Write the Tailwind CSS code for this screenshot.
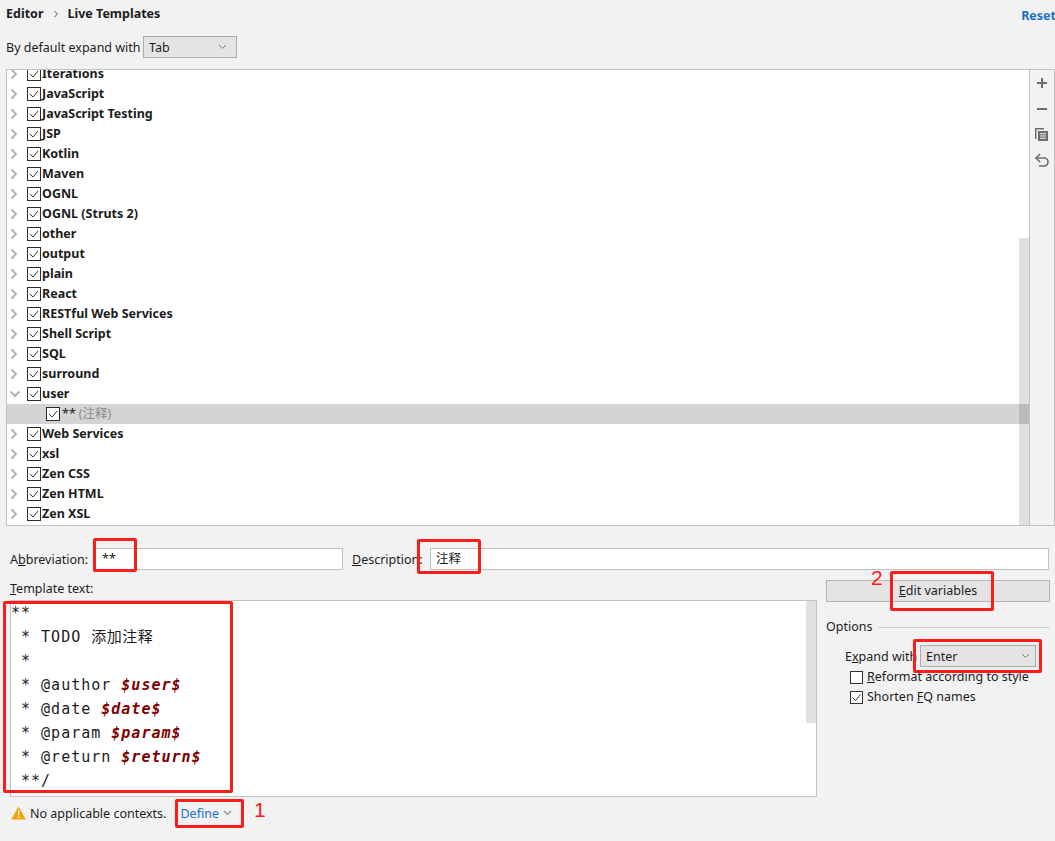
<!DOCTYPE html>
<html lang="en">
<head>
<meta charset="utf-8">
<title>Live Templates</title>
<script src="https://cdn.jsdelivr.net/npm/@tailwindcss/browser@4"></script>
</head>
<body class="m-0 bg-[#f2f2f2]">
<div class="relative flex h-[841px] w-[1055px] flex-col overflow-hidden whitespace-nowrap bg-[#f2f2f2] font-['Noto_Sans','Noto_Sans_CJK_SC',sans-serif] text-[12.5px] leading-[18px] text-[#1c1c1c]">

  <!-- breadcrumb -->
  <div class="flex h-[29px] justify-between pl-[6px] pt-[5px]">
    <div class="flex items-center self-start font-bold">
      <span>Editor</span>
      <svg class="ml-[9px] mr-[7px]" width="8" height="10" viewBox="0 0 8 10"><path d="M2.500 2l3 3-3 3" fill="none" stroke="#555" stroke-width="1"/></svg>
      <span>Live Templates</span>
    </div>
    <span class="-mr-[1px] mt-[2px] font-bold text-[#1a73c8]">Reset</span>
  </div>

  <!-- default expand -->
  <div class="flex h-[40px] items-center pb-[4px] pl-[6px]">
    <span class="w-[137px] pt-[2px]">By default expand with</span>
    <div class="flex h-[22px] w-[94px] items-center justify-between border border-[#adadad] bg-[#e4e4e4] pl-[5px] pr-[9px]">
      <span class="pt-[2px]">Tab</span>
      <svg width="9" height="6" viewBox="0 0 9 6"><path d="M1 1l3.500 3.500L8 1" fill="none" stroke="#7a7a7a"/></svg>
    </div>
  </div>

  <!-- template tree -->
  <div class="ml-[6px] flex h-[457px] w-[1049px] border border-[#c2c2c2]">
    <div class="relative w-[1022px] overflow-hidden bg-white">
      <div id="tree" class="-mt-[6px]"></div>
      <div class="absolute bottom-0 right-0 top-[168px] w-[10px] bg-black/[0.12]"></div>
    </div>
    <div class="flex w-[25px] flex-col items-center gap-[6px] border-l border-[#c2c2c2] pr-[1px] pt-[3px]">
      <svg width="20" height="20" viewBox="0 0 20 20"><path d="M10 5v10M5 10h10" stroke="#6e6e6e" stroke-width="2"/></svg>
      <svg width="20" height="20" viewBox="0 0 20 20"><path d="M5 10h10" stroke="#6e6e6e" stroke-width="2"/></svg>
      <svg width="20" height="20" viewBox="0 0 20 20"><path d="M3 3h9v1.500H4.500V14H3z" fill="#6e6e6e"/><path fill-rule="evenodd" d="M6 6h10v10H6zM8 8.200v1h6v-1zM8 10.500v1h6v-1zM8 12.800v1h6v-1z" fill="#6e6e6e"/></svg>
      <svg width="20" height="20" viewBox="0 0 20 20"><path d="M5 7h7a3.500 3.500 0 0 1 0 8H7" fill="none" stroke="#6e6e6e" stroke-width="1.600"/><path d="M8 3L4 7l4 4" fill="none" stroke="#6e6e6e" stroke-width="1.600"/></svg>
    </div>
  </div>

  <!-- abbreviation / description -->
  <div class="mt-[22px] flex h-[22px] items-center pl-[10px]">
    <span class="w-[84px] pt-[2px]">A<u>b</u>breviation:</span>
    <div class="flex h-[22px] w-[249px] items-center border border-[#c2c2c2] bg-white pl-[7px]">**</div>
    <span class="ml-[9px] w-[78px] pt-[2px]"><u>D</u>escription:</span>
    <div class="flex h-[22px] w-[619px] items-center border border-[#c2c2c2] bg-white pl-[5px]">注释</div>
  </div>

  <!-- editor + options -->
  <div class="mt-[8px] flex pl-[10px]">
    <div class="w-[807px]">
      <div class="h-[22px] pt-[1px] leading-[20px]"><u>T</u>emplate text:</div>
      <div class="relative h-[197px] border border-[#c2c2c2] bg-white font-['DejaVu_Sans_Mono','Noto_Sans_CJK_SC',monospace] text-[15px] leading-[24px] tracking-[1px]">
        <div class="h-[24px] whitespace-pre">**</div>
        <div class="h-[24px] whitespace-pre"> * TODO <span class="tracking-[0.5px]">添加注释</span></div>
        <div class="h-[24px] whitespace-pre"> *</div>
        <div class="h-[24px] whitespace-pre"> * @author <b class="italic text-[#7f0000]">$user$</b></div>
        <div class="h-[24px] whitespace-pre"> * @date <b class="italic text-[#7f0000]">$date$</b></div>
        <div class="h-[24px] whitespace-pre"> * @param <b class="italic text-[#7f0000]">$param$</b></div>
        <div class="h-[24px] whitespace-pre"> * @return <b class="italic text-[#7f0000]">$return$</b></div>
        <div class="h-[24px] whitespace-pre"> **/</div>
        <div class="absolute right-0 top-0 h-[122px] w-[10px] bg-[#e0e0e0]"></div>
      </div>
      <div class="flex h-[32px] items-center pl-[1px]">
        <svg width="15" height="14" viewBox="0 0 15 14"><path d="M7.500 0.500L14.800 13.500H0.200z" fill="#f0a30a"/><path d="M7 4.500h1.300v5H7zM7 10.500h1.300v1.500H7z" fill="#fff"/></svg>
        <span class="ml-[4px] pt-[2px]">No applicable contexts.</span>
        <span class="ml-[14px] pt-[2px] text-[#1a73c8]">Define</span>
        <svg class="ml-[4px]" width="9" height="6" viewBox="0 0 9 6"><path d="M1 1l3.500 3.500L8 1" fill="none" stroke="#8a8a8a" stroke-width="1.200"/></svg>
      </div>
    </div>
    <div class="ml-[9px] mt-[2px] w-[224px]">
      <div class="flex h-[22px] items-center justify-center border border-[#b5b5b5] bg-[#e4e4e4]"><span><u>E</u>dit variables</span></div>
      <div class="mt-[16px] flex items-center">
        <span>Options</span>
        <div class="ml-[6px] h-px flex-1 bg-[#cfcfcf]"></div>
      </div>
      <div class="mt-[9px] flex h-[22px] items-center pl-[19px]">
        <span class="w-[75px] pt-[2px]">E<u>x</u>pand with</span>
        <div class="flex h-[22px] w-[116px] items-center justify-between border border-[#adadad] bg-[#e4e4e4] pl-[5px] pr-[5px]">
          <span class="pt-[2px]">Enter</span>
          <svg width="9" height="6" viewBox="0 0 9 6"><path d="M1 1l3.500 3.500L8 1" fill="none" stroke="#7a7a7a"/></svg>
        </div>
      </div>
      <div class="flex h-[20px] items-center pl-[24px]">
        <div class="h-[13px] w-[13px] border border-[#333] bg-white"></div>
        <span class="ml-[4px]"><u>R</u>eformat according to style</span>
      </div>
      <div class="flex h-[20px] items-center pl-[24px]">
        <svg width="13" height="13" viewBox="0 0 13 13"><rect x="0.500" y="0.500" width="12" height="12" fill="#fff" stroke="#333"/><path d="M2.500 6.500l3 3 5-6" fill="none" stroke="#333"/></svg>
        <span class="ml-[4px]">Shorten <u>F</u>Q names</span>
      </div>
    </div>
  </div>

  <!-- red annotations drawn over the screenshot -->
  <div class="absolute left-[93px] top-[538px] h-[34px] w-[44px] rounded-[2px] border-[3px] border-[#fb1c1c]"></div>
  <div class="absolute left-[417px] top-[539px] h-[35px] w-[64px] rounded-[2px] border-[3px] border-[#fb1c1c]"></div>
  <div class="absolute left-[890px] top-[571px] h-[40px] w-[104px] rounded-[2px] border-[3px] border-[#fb1c1c]"></div>
  <div class="absolute left-[913px] top-[639px] h-[34px] w-[129px] rounded-[2px] border-[3px] border-[#fb1c1c]"></div>
  <div class="absolute left-[3px] top-[601px] h-[192px] w-[230px] rounded-[2px] border-[3px] border-[#fb1c1c]"></div>
  <div class="absolute left-[175px] top-[799px] h-[29px] w-[69px] rounded-[2px] border-[3px] border-[#fb1c1c]"></div>
  <span class="absolute left-[871px] top-[566px] font-['Liberation_Sans',sans-serif] text-[21px] leading-[24px] text-[#fb1c1c]">2</span>
  <span class="absolute left-[254px] top-[798px] font-['Liberation_Sans',sans-serif] text-[21px] leading-[24px] text-[#fb1c1c]">1</span>
</div>
<script>
  const check='<svg class="shrink-0" width="14" height="14" viewBox="0 0 14 14"><rect x="0.500" y="0.500" width="13" height="13" fill="#fff" stroke="#2b2b2b"/><path d="M3 7l3 3 5-6" fill="none" stroke="#333"/></svg>'
  const closed='<svg class="shrink-0" width="10" height="12" viewBox="0 0 10 12"><path d="M2.500 1.500L7 6l-4.500 4.500" fill="none" stroke="#b4b4b4" stroke-width="2"/></svg>'
  const opened='<svg class="shrink-0" width="12" height="10" viewBox="0 0 12 10"><path d="M1.500 2.500L6 7l4.500-4.500" fill="none" stroke="#b4b4b4" stroke-width="2"/></svg>'
  const groups=['Iterations','JavaScript','JavaScript Testing','JSP','Kotlin','Maven','OGNL','OGNL (Struts 2)','other','output','plain','React','RESTful Web Services','Shell Script','SQL','surround','user','**','Web Services','xsl','Zen CSS','Zen HTML','Zen XSL']
  document.getElementById('tree').innerHTML=groups.map(g=>{
    if(g==='**')return '<div class="flex h-[20px] items-center bg-[#d4d4d4] pl-[39px]">'+check+'<span class="ml-[2px]">**</span><span class="ml-[3px] text-[#8c8c8c]">(注释)</span></div>'
    return '<div class="flex h-[20px] items-center pl-[1px]"><div class="flex w-[19px] justify-start pl-[1px]">'+(g==='user'?opened:closed)+'</div>'+check+'<span class="ml-[1px] font-bold">'+g+'</span></div>'
  }).join('')
</script>
</body>
</html>
